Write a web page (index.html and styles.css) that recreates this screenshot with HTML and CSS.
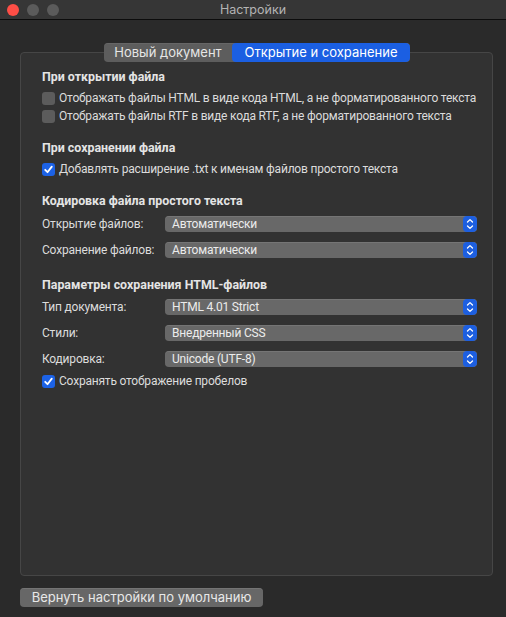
FILE: index.html
```html
<!DOCTYPE html>
<html lang="ru">
<head>
<meta charset="utf-8">
<title>Настройки</title>
<link rel="stylesheet" href="styles.css">
</head>
<body>
<div class="window">
  <div class="titlebar">
    <div class="lights">
      <span class="light red"></span>
      <span class="light gray"></span>
      <span class="light gray"></span>
    </div>
    <div class="title">Настройки</div>
  </div>
  <div class="content">
    <div class="tabs">
      <div class="tab">Новый документ</div>
      <div class="tab active">Открытие и сохранение</div>
    </div>
    <div class="box">
      <div class="heading h1">При открытии файла</div>
      <label class="check"><span class="cb"></span>Отображать файлы HTML в виде кода HTML, а не форматированного текста</label>
      <label class="check"><span class="cb"></span>Отображать файлы RTF в виде кода RTF, а не форматированного текста</label>

      <div class="heading h2">При сохранении файла</div>
      <label class="check"><span class="cb on"><svg viewBox="0 0 13 13" width="13" height="13"><path d="M3.2 6.8 L5.5 9.2 L9.8 3.6" fill="none" stroke="#fff" stroke-width="1.8" stroke-linecap="round" stroke-linejoin="round"/></svg></span>Добавлять расширение .txt к именам файлов простого текста</label>

      <div class="heading h2">Кодировка файла простого текста</div>
      <div class="form first">
        <div class="row"><span class="lbl">Открытие файлов:</span><div class="popup"><span class="val">Автоматически</span><span class="arrows"><svg viewBox="0 0 14 16" width="14" height="16"><path d="M4.5 6 L7 3.6 L9.5 6 M4.5 10 L7 12.4 L9.5 10" fill="none" stroke="#fff" stroke-width="1.3" stroke-linecap="round" stroke-linejoin="round"/></svg></span></div></div>
        <div class="row"><span class="lbl">Сохранение файлов:</span><div class="popup"><span class="val">Автоматически</span><span class="arrows"><svg viewBox="0 0 14 16" width="14" height="16"><path d="M4.5 6 L7 3.6 L9.5 6 M4.5 10 L7 12.4 L9.5 10" fill="none" stroke="#fff" stroke-width="1.3" stroke-linecap="round" stroke-linejoin="round"/></svg></span></div></div>
      </div>

      <div class="heading h3">Параметры сохранения HTML-файлов</div>
      <div class="form">
        <div class="row"><span class="lbl">Тип документа:</span><div class="popup"><span class="val">HTML 4.01 Strict</span><span class="arrows"><svg viewBox="0 0 14 16" width="14" height="16"><path d="M4.5 6 L7 3.6 L9.5 6 M4.5 10 L7 12.4 L9.5 10" fill="none" stroke="#fff" stroke-width="1.3" stroke-linecap="round" stroke-linejoin="round"/></svg></span></div></div>
        <div class="row"><span class="lbl">Стили:</span><div class="popup"><span class="val">Внедренный CSS</span><span class="arrows"><svg viewBox="0 0 14 16" width="14" height="16"><path d="M4.5 6 L7 3.6 L9.5 6 M4.5 10 L7 12.4 L9.5 10" fill="none" stroke="#fff" stroke-width="1.3" stroke-linecap="round" stroke-linejoin="round"/></svg></span></div></div>
        <div class="row"><span class="lbl">Кодировка:</span><div class="popup"><span class="val">Unicode (UTF-8)</span><span class="arrows"><svg viewBox="0 0 14 16" width="14" height="16"><path d="M4.5 6 L7 3.6 L9.5 6 M4.5 10 L7 12.4 L9.5 10" fill="none" stroke="#fff" stroke-width="1.3" stroke-linecap="round" stroke-linejoin="round"/></svg></span></div></div>
      </div>
      <label class="check after"><span class="cb on"><svg viewBox="0 0 13 13" width="13" height="13"><path d="M3.2 6.8 L5.5 9.2 L9.8 3.6" fill="none" stroke="#fff" stroke-width="1.8" stroke-linecap="round" stroke-linejoin="round"/></svg></span>Сохранять отображение пробелов</label>
    </div>
    <div class="footer">
      <button class="btn">Вернуть настройки по умолчанию</button>
    </div>
  </div>
</div>
</body>
</html>
```
FILE: styles.css
```css
html, body {
  margin: 0;
  padding: 0;
  background: #2a2a2a;
}
body {
  font-family: "Roboto", "Noto Sans", "Liberation Sans", sans-serif;
  font-size: 12px;
  color: #dcdcdc;
  width: 506px;
  height: 617px;
  overflow: hidden;
}
.window {
  display: flex;
  flex-direction: column;
  height: 617px;
}
.titlebar {
  height: 19px;
  border-bottom: 1px solid #0c0c0c;
  background: #363636;
  display: flex;
  align-items: center;
  position: relative;
}
.lights {
  display: flex;
  gap: 8px;
  padding-left: 7px;
}
.light {
  width: 12px;
  height: 12px;
  border-radius: 50%;
  background: #5b5b5b;
}
.light.red {
  background: #fe4e46;
}
.title {
  position: absolute;
  left: 0;
  right: 0;
  top: 0;
  text-align: center;
  line-height: 19px;
  font-family: "Inter", "Roboto", sans-serif;
  font-size: 12.5px;
  color: #b4b4b4;
}
.content {
  padding: 23px 13px 0 20px;
  display: flex;
  flex-direction: column;
}
.tabs {
  display: flex;
  justify-content: center;
  margin-left: 84px;
  margin-right: 83px;
  height: 19px;
  margin-bottom: -10px;
  position: relative;
  z-index: 1;
  border-radius: 4px;
  overflow: hidden;
  background: #5d5d5d;
  box-shadow: 0 0.5px 0 rgba(255,255,255,0.12) inset;
}
.tab {
  flex: none;
  line-height: 19px;
  font-family: "Inter", "Roboto", sans-serif;
  font-size: 13px;
  color: #e6e6e6;
  text-align: center;
  white-space: nowrap;
}
.tab:first-child {
  width: 128px;
}
.tab.active {
  flex: 1;
  background: #1b5fe2;
  color: #ffffff;
  border-radius: 4px;
}
.box {
  height: 524px;
  box-sizing: border-box;
  border: 1px solid #464646;
  border-radius: 4px;
  background: #323232;
  padding: 15px 15px 0 21px;
  display: flex;
  flex-direction: column;
}
.heading {
  font-weight: 700;
  font-size: 12.4px;
  line-height: 16px;
  color: #e4e4e4;
  white-space: nowrap;
}
.h1 {
  margin-top: 1px;
  margin-bottom: -1px;
}
.h2 {
  margin-top: 15px;
  margin-bottom: -1px;
}
.h3 {
  margin-top: 19px;
  margin-bottom: -1px;
}
.check {
  display: flex;
  align-items: center;
  height: 18px;
  gap: 4px;
  white-space: nowrap;
  letter-spacing: -0.2px;
}
.heading + .check {
  margin-top: 5px;
}
.check.after {
  margin-top: 5px;
}
.cb {
  width: 13px;
  height: 13px;
  box-sizing: border-box;
  border-radius: 3px;
  background: #5c5c5c;
  flex: none;
  display: flex;
}
.cb.on {
  background: #1c62e6;
}
.form {
  display: flex;
  flex-direction: column;
  gap: 10px;
  margin-top: 7px;
}
.form.first {
  margin-top: 8px;
}
.row {
  display: grid;
  grid-template-columns: 123px 312px;
  align-items: center;
  height: 16px;
}
.lbl {
  line-height: 16px;
  white-space: nowrap;
  letter-spacing: -0.2px;
}
.popup {
  display: flex;
  height: 16px;
  border-radius: 4px;
  background: #686868;
  box-shadow: 0 0.5px 0 rgba(255,255,255,0.18) inset;
  overflow: hidden;
}
.val {
  flex: 1;
  padding-left: 7px;
  line-height: 16px;
  color: #ececec;
  white-space: nowrap;
  letter-spacing: -0.2px;
}
.arrows {
  width: 14px;
  height: 16px;
  background: #1d5fe0;
  border-radius: 4px;
  display: flex;
}
.footer {
  padding-top: 12px;
  display: flex;
}
.btn {
  font-family: "Inter", "Roboto", sans-serif;
  font-size: 13px;
  color: #e8e8e8;
  background: #676767;
  border: none;
  border-radius: 4px;
  width: 243px;
  height: 19px;
  padding: 0;
  line-height: 19px;
  box-shadow: 0 0.5px 0 rgba(255,255,255,0.18) inset;
}
```
